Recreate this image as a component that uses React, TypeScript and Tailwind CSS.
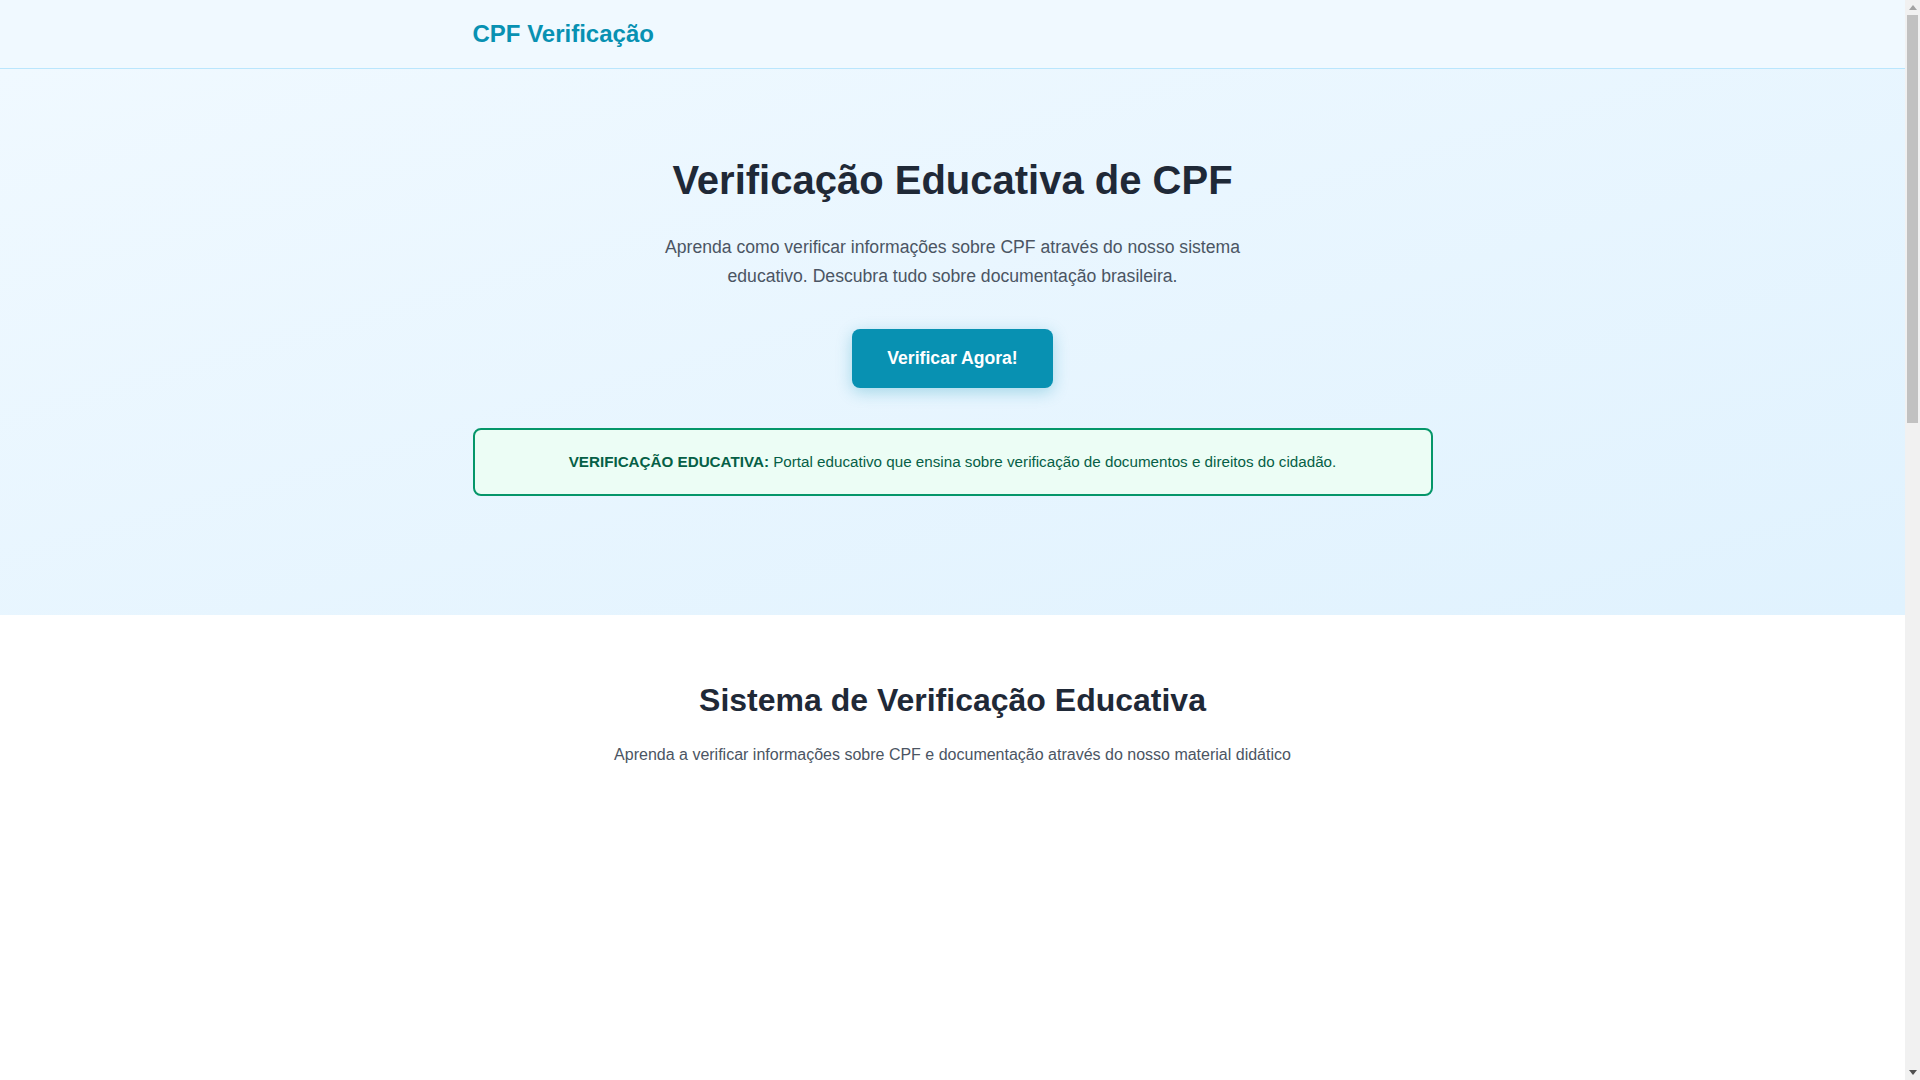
import React from "react";

function FakeScrollbar() {
  return (
    <div className="w-[15px] shrink-0 h-screen bg-[#f1f1f1] flex flex-col">
      <div className="h-[15px] flex items-center justify-center">
        <svg width="8" height="5" viewBox="0 0 8 5">
          <polygon points="4,0 8,5 0,5" fill="#a3a3a3" />
        </svg>
      </div>
      <div className="flex-1 px-[2px]">
        <div className="h-[408px] bg-[#c1c1c1]" />
      </div>
      <div className="h-[15px] flex items-center justify-center">
        <svg width="8" height="5" viewBox="0 0 8 5">
          <polygon points="0,0 8,0 4,5" fill="#505050" />
        </svg>
      </div>
    </div>
  );
}

export default function App() {
  return (
    <div
      className="h-screen flex overflow-hidden bg-white"
      style={{ fontFamily: '"Liberation Sans", Arial, sans-serif' }}
    >
      <main className="flex-1 min-w-0 h-screen overflow-hidden">
        <header className="bg-[#f0f9ff] border-b border-[#bae6fd]">
          <div className="max-w-[960px] mx-auto py-5">
            <div className="text-[24px] leading-7 font-bold text-[#0891b2]">CPF Verificação</div>
          </div>
        </header>

        <section className="bg-gradient-to-br from-[#f0f9ff] to-[#e0f2fe] pt-[87px] pb-[119px]">
          <div className="max-w-[960px] mx-auto flex flex-col items-center text-center">
            <h1 className="text-[40px] leading-[48px] font-bold text-[#1f2937]">
              Verificação Educativa de CPF
            </h1>
            <p className="mt-[29px] max-w-[600px] text-[17.6px] leading-[29px] text-[#4b5563]">
              Aprenda como verificar informações sobre CPF através do nosso sistema educativo. Descubra tudo sobre documentação brasileira.
            </p>
            <button className="mt-[38px] px-[35px] py-[18px] rounded-lg bg-[#0891b2] text-white text-[17.6px] leading-[23px] font-bold shadow-[0_4px_16px_rgba(8,145,178,0.3)]">
              Verificar Agora!
            </button>
            <div className="mt-10 w-full rounded-lg border-2 border-[#059669] bg-[#ecfdf5] py-5 text-[15.2px] leading-6 text-[#065f46]">
              <strong className="font-bold">VERIFICAÇÃO EDUCATIVA:</strong> Portal educativo que ensina sobre verificação de documentos e direitos do cidadão.
            </div>
          </div>
        </section>

        <section className="bg-white pt-[65px] min-h-[2165px]">
          <div className="max-w-[960px] mx-auto text-center">
            <h2 className="text-[32px] leading-10 font-bold text-[#1f2937]">
              Sistema de Verificação Educativa
            </h2>
            <p className="mt-[23px] text-[16px] leading-6 text-[#4b5563]">
              Aprenda a verificar informações sobre CPF e documentação através do nosso material didático
            </p>
          </div>
        </section>
      </main>
      <FakeScrollbar />
    </div>
  );
}
